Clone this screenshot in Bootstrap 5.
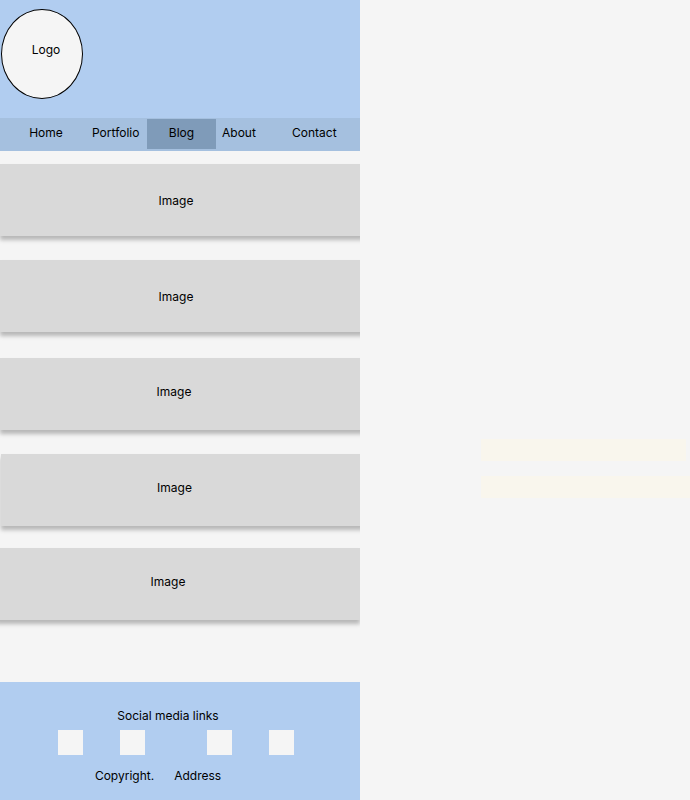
<!DOCTYPE html>
<html lang="en">
<head>
<meta charset="utf-8">
<meta name="viewport" content="width=device-width, initial-scale=1">
<title>Blog</title>
<link href="https://cdn.jsdelivr.net/npm/bootstrap@5.3.0/dist/css/bootstrap.min.css" rel="stylesheet">
<style>
  body { background: #f5f5f5; color: #000; font: 12px/16px Inter, "Liberation Sans", sans-serif; }
  a { color: inherit; text-decoration: none; }
  .screen { flex: 0 1 360px; }
  .masthead { background: #b1cdf0; padding: 9px 1px 19px; }
  .logo { width: 82px; height: 90px; border: 1px solid #000; background: #f5f5f5; padding: 0 0 8px 8px; }
  .site-nav { display: grid; grid-template-columns: 92fr 55fr 69fr 70fr 74fr; background: #a5c0df; padding: 1px 0 2px; }
  .site-nav a { padding: 6px 0 8px; }
  .site-nav .inset { padding-left: 6px; }
  .site-nav .active { background: #7f9bb9; }
  .posts { padding: 13px 0 62px; }
  .post { height: 72px; background: #d9d9d9; box-shadow: 0 4px 4px rgba(0, 0, 0, .25); margin-right: -4px; padding: 2px 12px 0 0; }
  .post + .post { margin-top: 24px; }
  .post.low { padding: 0 16px 4px 0; }
  .post.spaced { margin-top: 26px; }
  .post.indent { margin-left: 1px; }
  .post.final { margin: 22px 0 0 -4px; padding-right: 20px; }
  .site-footer { background: #b1cdf0; padding: 26px 0 16px; }
  .footer-title { padding-right: 24px; }
  .social { padding: 6px 66px 13px 58px; }
  .social a { width: 25px; height: 25px; background: #f5f5f5; }
  .social .pair { gap: 37px; }
  .legal { gap: 20px; padding-right: 44px; }
  .notes { padding: 439px 0 0 121px; }
  .note { height: 22px; background: #f9f6ed; }
  .note + .note { margin-top: 15px; }
  .note.short { margin-right: 4px; }
</style>
<script src="https://cdn.jsdelivr.net/npm/bootstrap@5.3.0/dist/js/bootstrap.bundle.min.js" defer></script>
</head>
<body>
<div class="d-flex">
  <div class="screen overflow-hidden">
    <header>
      <div class="masthead">
        <a href="#" class="logo rounded-circle d-flex align-items-center justify-content-center">Logo</a>
      </div>
      <nav class="site-nav" aria-label="Main">
        <a href="#" class="text-center">Home</a>
        <a href="#">Portfolio</a>
        <a href="#" class="active text-center" aria-current="page">Blog</a>
        <a href="#" class="inset">About</a>
        <a href="#" class="inset">Contact</a>
      </nav>
    </header>
    <main class="posts">
      <div class="post d-flex align-items-center justify-content-center">Image</div>
      <div class="post d-flex align-items-center justify-content-center">Image</div>
      <div class="post low spaced d-flex align-items-center justify-content-center">Image</div>
      <div class="post low indent d-flex align-items-center justify-content-center">Image</div>
      <div class="post low final d-flex align-items-center justify-content-center">Image</div>
    </main>
    <footer class="site-footer">
      <div class="footer-title text-center">Social media links</div>
      <div class="social d-flex justify-content-between">
        <div class="pair d-flex">
          <a href="#" aria-label="Social link 1"></a>
          <a href="#" aria-label="Social link 2"></a>
        </div>
        <div class="pair d-flex">
          <a href="#" aria-label="Social link 3"></a>
          <a href="#" aria-label="Social link 4"></a>
        </div>
      </div>
      <div class="legal d-flex justify-content-center"><span>Copyright.</span><span>Address</span></div>
    </footer>
  </div>
  <aside class="notes flex-grow-1">
    <div class="note short"></div>
    <div class="note"></div>
  </aside>
</div>
</body>
</html>
